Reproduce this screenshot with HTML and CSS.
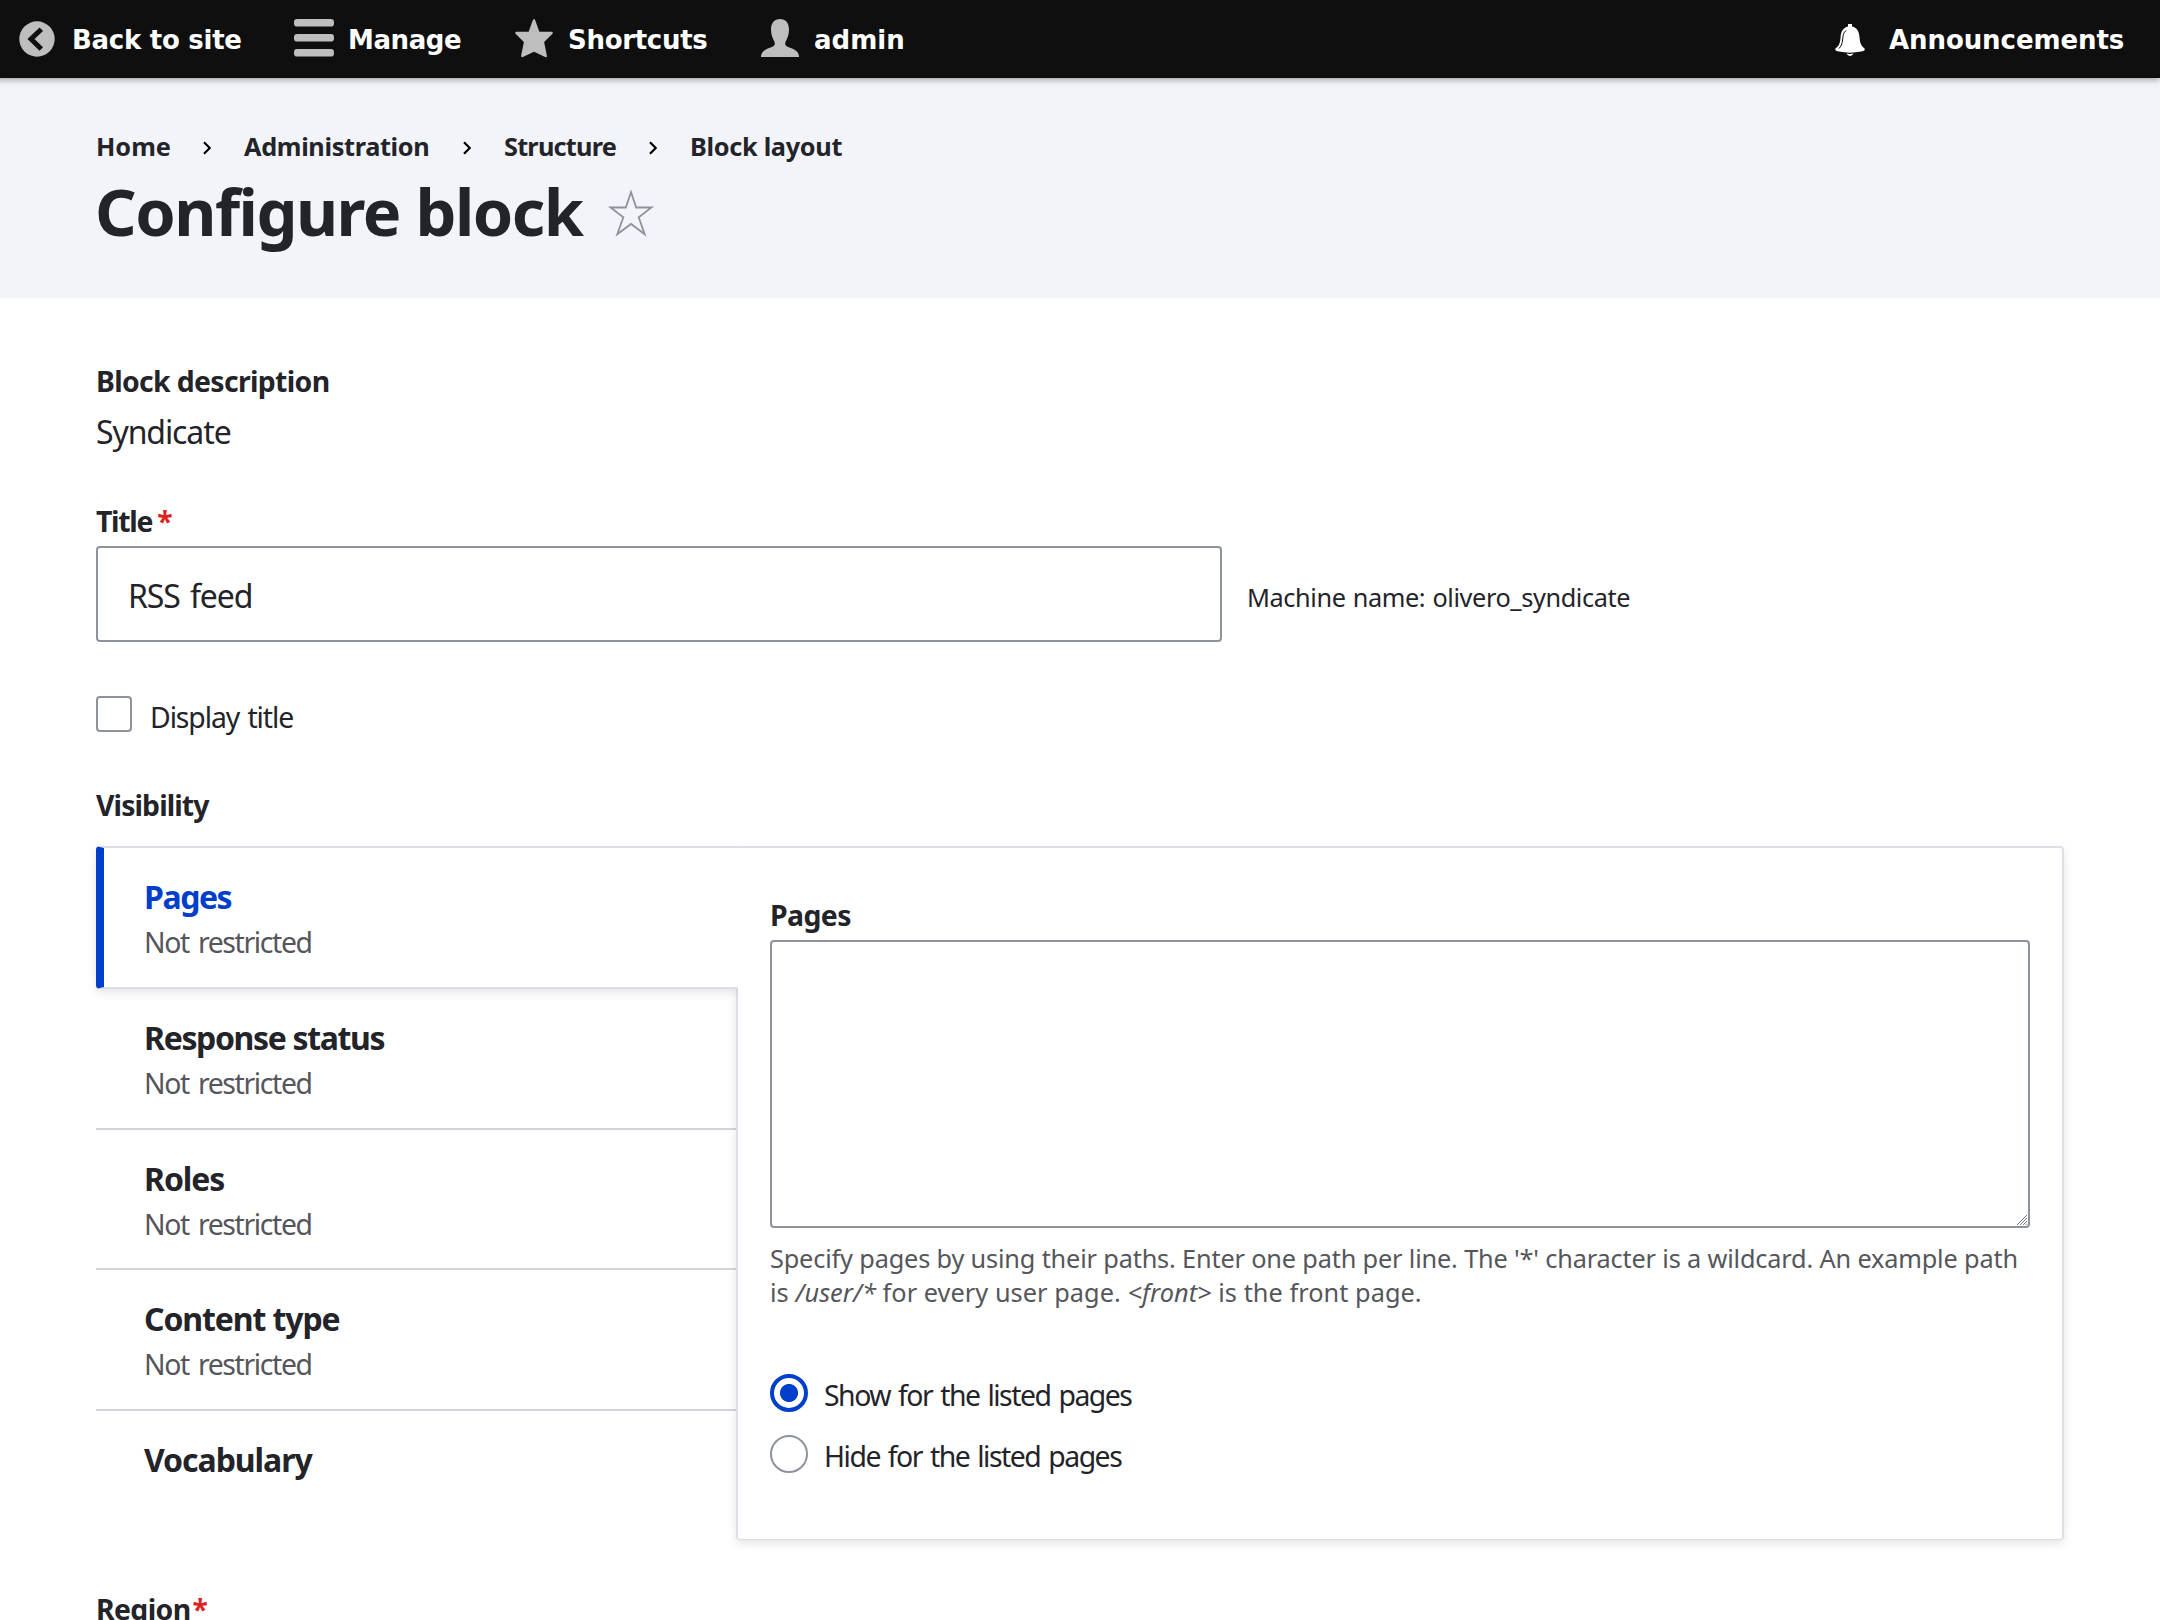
FILE: index.html
```html
<!DOCTYPE html>
<html lang="en">
<head>
<meta charset="utf-8">
<title>Configure block</title>
<link rel="stylesheet" href="styles.css">
</head>
<body>
<nav class="toolbar">
  <a class="tool tool-back"><svg class="tool-icon" viewBox="0 0 40 40"><circle cx="20" cy="20" r="17.7" fill="#bebebe"/><path d="M24.3 10.2 L14 20 L24.3 30" fill="none" stroke="#0f0f0f" stroke-width="5"/></svg><span class="t-back">Back to site</span></a>
  <a class="tool tool-manage"><svg class="tool-icon" viewBox="0 0 16 16"><g fill="#bebebe"><rect y="0" width="16" height="3" rx="1.25"/><rect y="6" width="16" height="3" rx="1.25"/><rect y="12" width="16" height="3" rx="1.25"/></g></svg><span class="t-manage">Manage</span></a>
  <a class="tool tool-shortcuts"><svg class="tool-icon" viewBox="0 0 40 40"><path d="M20 1.4 L24.5 14 L37.6 14 L28.8 22.6 L31.7 37 L20 31.3 L8.3 37 L11.2 22.6 L2.4 14 L15.5 14 Z" fill="#bebebe" stroke="#bebebe" stroke-width="2.4" stroke-linejoin="round"/></svg><span class="t-short">Shortcuts</span></a>
  <a class="tool tool-user"><svg class="tool-icon" viewBox="0 0 40 40"><path d="M1 38 C1 32.500 5 30.500 10.500 28.500 C15 27 15.500 25.500 14.300 22.500 C12.500 19 11 15.500 11 10.500 C11 4 14.500 0 20 0 C25.500 0 29 4 29 10.500 C29 15.500 27.500 19 25.700 22.500 C24.500 25.500 25 27 29.500 28.500 C35 30.500 39 32.500 39 38 Z" fill="#bebebe"/></svg><span class="t-admin">admin</span></a>
  <a class="tool tool-news"><svg class="bell" viewBox="0 0 30 32"><path d="M13 0 h4 v2.600 C22.500 3.800 24 8 24.500 13 C25 19 26 21.500 29 24 C31 26 29 27 26 27.600 C19 29 11 29 4 27.600 C1 27 -1 26 1 24 C4.500 21.500 5.200 18 5.600 13 C6 8 8 3.800 13 2.600 Z M11.500 29.600 Q15 30.200 18.500 29.600 Q17.500 32 15 32 Q12.500 32 11.500 29.600 Z" fill="#fff"/><path d="M11 6.500 C8 9 8 12 7.600 16 C7.200 20 6 22.500 4 24.500" fill="none" stroke="#0f0f0f" stroke-width="1"/></svg><span class="t-news">Announcements</span></a>
</nav>
<header class="page-header">
  <ol class="breadcrumb">
    <li class="c-home">Home</li><li class="sep"><svg viewBox="0 0 8 14"><path d="M1 1.200 L6.800 7 L1 12.800"/></svg></li>
    <li class="c-adm">Administration</li><li class="sep"><svg viewBox="0 0 8 14"><path d="M1 1.200 L6.800 7 L1 12.800"/></svg></li>
    <li class="c-str">Structure</li><li class="sep"><svg viewBox="0 0 8 14"><path d="M1 1.200 L6.800 7 L1 12.800"/></svg></li>
    <li class="c-blk">Block layout</li>
  </ol>
  <div class="title-row"><h1>Configure block</h1><svg class="star" viewBox="0 0 48 48"><path d="M24 3 L29.200 18.500 L44.500 18.500 L31.700 28.300 L37.700 45.300 L24 35 L10.300 45.300 L16.300 28.300 L3.500 18.500 L18.800 18.500 Z"/></svg></div>
</header>
<main class="content">
  <div class="label l-desc">Block description</div>
  <div class="value">Syndicate</div>
  <div class="label l-title">Title<span class="req">*</span></div>
  <div class="title-field"><input class="text-input" type="text" value="RSS feed"><span class="machine">Machine name: olivero_syndicate</span></div>
  <label class="check-row"><span class="checkbox"></span><span class="check-label">Display title</span></label>
  <div class="label l-vis">Visibility</div>
  <section class="tabs">
    <ul class="menu">
      <li class="tab active"><strong class="t-pages">Pages</strong><span>Not restricted</span></li>
      <li class="tab"><strong class="t-response">Response status</strong><span>Not restricted</span></li>
      <li class="tab"><strong class="t-roles">Roles</strong><span>Not restricted</span></li>
      <li class="tab"><strong class="t-content">Content type</strong><span>Not restricted</span></li>
      <li class="tab last"><strong class="t-vocab">Vocabulary</strong></li>
    </ul>
    <div class="pane">
      <div class="label l-pages">Pages</div>
      <div class="area-wrap"><textarea class="area"></textarea><svg class="grip" viewBox="0 0 10 10"><path d="M0 10 L10 0 M3 10 L10 3 M6 10 L10 6 M8.500 10 L10 8.500"/></svg></div>
      <p class="help"><span class="help-first">Specify pages by using their paths. Enter one path per line. The '*' character is a wildcard. An example path</span><br><span class="help-second">is <em>/user/*</em> for every user page. <em>&lt;front&gt;</em> is the front page.</span></p>
      <label class="radio-row"><span class="radio on"></span><span class="radio-label">Show for the listed pages</span></label>
      <label class="radio-row"><span class="radio"></span><span class="radio-label">Hide for the listed pages</span></label>
    </div>
  </section>
  <div class="label l-region">Region<span class="req">*</span></div>
</main>
</body>
</html>
```
FILE: styles.css
```css
* { box-sizing: border-box; }
html, body { height: 1620px; overflow: hidden; }
body { margin: 0; background: #fff; color: #232429; font-family: "Noto Sans", sans-serif; font-size: 32px; }
ul, ol, h1, p { margin: 0; padding: 0; list-style: none; }

/* Toolbar */
.toolbar { position: relative; z-index: 2; display: flex; height: 78px; background: #0f0f0f; box-shadow: -2px 0 6px 2px rgba(0,0,0,.333); color: #fff; font: bold 26px/80px "DejaVu Sans", sans-serif; white-space: nowrap; }
.tool { display: flex; flex: none; }
.tool-icon { width: 40px; height: 40px; margin-top: 19px; margin-right: 14px; flex: none; }
.tool-back { width: 274px; padding-left: 17px; }
.tool-back .tool-icon { margin-right: 15px; }
.tool-manage { width: 220px; padding-left: 20px; }
.tool-shortcuts { width: 246px; padding-left: 20px; }
.tool-user { padding-left: 20px; }
.tool-news { margin-left: auto; width: 325px; }
.bell { width: 30px; height: 32px; margin: 24px 24px 0 0; }
.t-back { letter-spacing: -.27px; }
.t-manage { letter-spacing: -.4px; }
.t-short { letter-spacing: -.3px; }
.t-news { letter-spacing: -.08px; }

/* Page header */
.page-header { height: 220px; padding: 48px 96px; background: #f3f4f9; }
.breadcrumb { display: flex; height: 40px; font-size: 25.3px; font-weight: 700; line-height: 40px; white-space: nowrap; }
.sep svg { display: block; width: 8px; height: 14px; margin-top: 15px; }
.sep path { fill: none; stroke: #000; stroke-width: 2.2; }
.c-home { width: 107px; }
.c-adm, .c-str, .c-blk { margin-left: 33px; }
.c-adm { width: 219px; letter-spacing: -.34px; }
.c-str { width: 145px; letter-spacing: -.78px; }
.c-blk { letter-spacing: -.31px; }
.title-row { display: flex; margin-top: 4px; }
h1 { width: 511px; margin-left: -1px; margin-right: 1px; font-size: 64.9px; line-height: 82px; height: 80px; letter-spacing: -1.5px; white-space: nowrap; }
.star { width: 48px; height: 48px; margin-top: 19px; }
.star path { fill: none; stroke: #8e929c; stroke-width: 1.8; }

/* Form */
.content { padding: 64px 96px 0; }
.label { font-size: 28.4px; font-weight: 700; line-height: 36px; white-space: nowrap; }
.req { margin-left: 5px; color: #dc2323; }
.l-desc { letter-spacing: -.66px; padding-top: 1px; height: 36px; }
.value { margin-top: 8px; padding-top: 2px; height: 48px; line-height: 48px; letter-spacing: -1.1px; }
.l-title { margin-top: 48px; padding-top: 1px; height: 36px; letter-spacing: -1.29px; }
.title-field { display: flex; align-items: center; margin-top: 8px; }
.text-input { width: 1126px; height: 96px; padding: 2px 30px 0; border: 2px solid #8e929c; border-radius: 4px; font: inherit; color: inherit; letter-spacing: -1.1px; word-spacing: 3px; }
.machine { margin-left: 25px; padding-top: 5px; font-size: 25.3px; line-height: 36px; letter-spacing: -.4px; word-spacing: 1px; white-space: nowrap; }
.check-row { display: flex; height: 38px; margin-top: 54px; font-size: 28.4px; line-height: 36px; }
.checkbox { width: 36px; height: 36px; border: 2px solid #8e929c; border-radius: 4px; }
.check-label { margin-left: 18px; padding-top: 3px; letter-spacing: -1.1px; word-spacing: 2px; }
.l-vis { margin-top: 52px; padding-top: 1px; height: 36px; letter-spacing: -.9px; }

/* Vertical tabs */
.tabs { display: flex; height: 694px; margin-top: 24px; }
.menu { width: 640px; flex: none; }
.tab { height: 140.5px; padding: 27px 0 0 48px; border-bottom: 2px solid #d3d4d9; }
.tab strong { display: block; line-height: 44px; }
.tab span { display: block; color: #55565b; font-size: 28.4px; line-height: 47px; letter-spacing: -1.37px; word-spacing: 3px; }
.tab.last { border-bottom: 0; }
.tab.active { position: relative; z-index: 1; width: 642px; height: 143px; padding-left: 40px; border: solid #dedfe4; border-width: 2px 0; border-left: 8px solid #003ecc; border-radius: 4px 0 0 4px; background: #fff; box-shadow: 0 4px 10px rgba(0,0,0,.1); clip-path: inset(-20px 0 -20px -20px); }
.tab.active strong { color: #003ecc; }
.tab .t-pages { letter-spacing: -1.45px; }
.tab .t-response { letter-spacing: -1.36px; }
.tab .t-roles { letter-spacing: -1.1px; }
.tab .t-content { letter-spacing: -1.11px; }
.tab .t-vocab { letter-spacing: -1.05px; }
.pane { flex: 1; min-width: 0; padding: 48px 32px 0; border: 2px solid #dedfe4; border-bottom-width: 1px; border-radius: 0 4px 4px 4px; background: #fff; box-shadow: 0 4px 10px rgba(0,0,0,.1); }
.l-pages { padding-top: 1px; height: 36px; letter-spacing: -.6px; }
.area-wrap { position: relative; width: 1260px; margin-top: 8px; }
.area { display: block; width: 1260px; height: 288px; border: 2px solid #8e929c; border-radius: 4px; resize: none; }
.grip { position: absolute; right: 3px; bottom: 3px; width: 10px; height: 10px; }
.grip path { fill: none; stroke: #7d7d7d; stroke-width: 1; }
.help { margin: 13px 0 65px; color: #55565b; font-size: 25.3px; line-height: 34px; white-space: nowrap; }
.help-first { letter-spacing: -.164px; }
.help-second { letter-spacing: .05px; }
.radio-row { display: flex; height: 60px; margin-top: 1px; font-size: 28.4px; line-height: 36px; white-space: nowrap; }
.radio { width: 38px; height: 38px; margin-right: 16px; border: 2px solid #8e929c; border-radius: 50%; }
.radio.on { border: 4px solid #003ecc; background: radial-gradient(circle, #003ecc 8.6px, #fff 9.4px); }
.radio-label { padding-top: 3px; letter-spacing: -1.48px; word-spacing: 2px; }
.l-region { margin-top: 51px; letter-spacing: -.6px; }
.l-region .req { margin-left: 2px; }
```
